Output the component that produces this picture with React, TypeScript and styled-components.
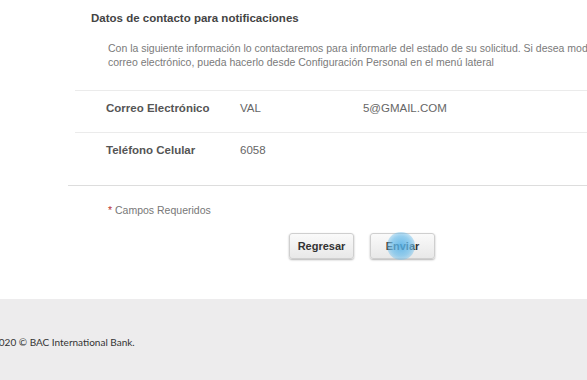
import React from 'react';
import styled, { createGlobalStyle } from 'styled-components';

const GlobalStyle = createGlobalStyle`
  html, body {
    margin: 0;
    padding: 0;
    background: #fff;
    overflow: hidden;
  }
  body {
    font-family: "Liberation Sans", Arial, sans-serif;
  }
`;

interface ContactRow {
  label: string;
  value: string;
  extra?: string;
}

const rows: ContactRow[] = [
  { label: 'Correo Electrónico', value: 'VAL', extra: '5@GMAIL.COM' },
  { label: 'Teléfono Celular', value: '6058' },
];

const App: React.FC = () => {
  return (
    <>
      <GlobalStyle />
      <Page>
        <Panel>
          <Title>Datos de contacto para notificaciones</Title>
          <Intro>
            Con la siguiente información lo contactaremos para informarle del estado de su solicitud. Si desea modificar su número
            <br />
            correo electrónico, pueda hacerlo desde Configuración Personal en el menú lateral
          </Intro>
          <RowList>
            {rows.map((r) => (
              <Row key={r.label}>
                <Label>{r.label}</Label>
                <Value>{r.value}</Value>
                {r.extra && <ValueTail>{r.extra}</ValueTail>}
              </Row>
            ))}
          </RowList>
          <FormFoot>
            <Required>
              <span>*</span> Campos Requeridos
            </Required>
            <Actions>
              <Button>Regresar</Button>
              <Button>
                Enviar
                <ClickRipple />
              </Button>
            </Actions>
          </FormFoot>
        </Panel>
        <Footer>
          <Copy>2020 © BAC International Bank.</Copy>
        </Footer>
      </Page>
    </>
  );
};

export default App;

const Page = styled.div`
  width: 100%;
  min-height: 380px;
  display: flex;
  flex-direction: column;
`;

const Panel = styled.div`
  margin-left: 68px;
  width: 588px;
  padding-top: 11px;
`;

const Title = styled.h3`
  margin: 0;
  padding-left: 23px;
  font-size: 11.5px;
  line-height: 14px;
  font-weight: bold;
  color: #444;
`;

const Intro = styled.p`
  margin: 16px 0 0;
  padding-left: 40px;
  font-size: 10.5px;
  line-height: 14px;
  color: #7a7a7a;
  white-space: nowrap;
`;

const RowList = styled.div`
  margin: 21px 0 0 7px;
`;

const Row = styled.div`
  display: flex;
  align-items: center;
  padding: 10px 0 17px 31px;
  border-top: 1px solid #ebebeb;
  font-size: 11.5px;
  line-height: 14px;

  &:last-child {
    padding-bottom: 28px;
  }
`;

const Label = styled.div`
  width: 134px;
  font-weight: bold;
  color: #555;
`;

const Value = styled.div`
  color: #666;
`;

const ValueTail = styled(Value)`
  margin-left: 102px;
`;

const FormFoot = styled.div`
  border-top: 1px solid #ddd;
  padding-top: 17px;
`;

const Required = styled.div`
  padding-left: 40px;
  font-size: 10.5px;
  line-height: 14px;
  color: #777;

  span {
    color: #b33;
  }
`;

const Actions = styled.div`
  display: flex;
  justify-content: center;
  gap: 16px;
  margin-top: 16px;
`;

const Button = styled.button`
  position: relative;
  width: 65px;
  height: 26px;
  padding: 0;
  border: 1px solid #cfcfcf;
  border-radius: 3px;
  background: linear-gradient(#fafafa, #e8e8e8);
  box-shadow: 0 1px 2px rgba(0, 0, 0, 0.3);
  font-family: "Liberation Sans", Arial, sans-serif;
  font-size: 11px;
  font-weight: bold;
  color: #333;
`;

const ClickRipple = styled.span`
  position: absolute;
  left: 16px;
  top: -2px;
  width: 28px;
  height: 28px;
  border-radius: 50%;
  background: radial-gradient(circle, rgba(80, 175, 230, 0.85) 0%, rgba(110, 190, 235, 0.7) 50%, rgba(140, 205, 240, 0) 100%);
  pointer-events: none;
`;

const Footer = styled.footer`
  margin-top: 40px;
  height: 82px;
  background: #edeced;
  padding-top: 36px;
  box-sizing: border-box;
`;

const Copy = styled.div`
  margin-left: -7px;
  font-family: Lato, sans-serif;
  font-size: 10px;
  line-height: 14px;
  color: #333;
`;
